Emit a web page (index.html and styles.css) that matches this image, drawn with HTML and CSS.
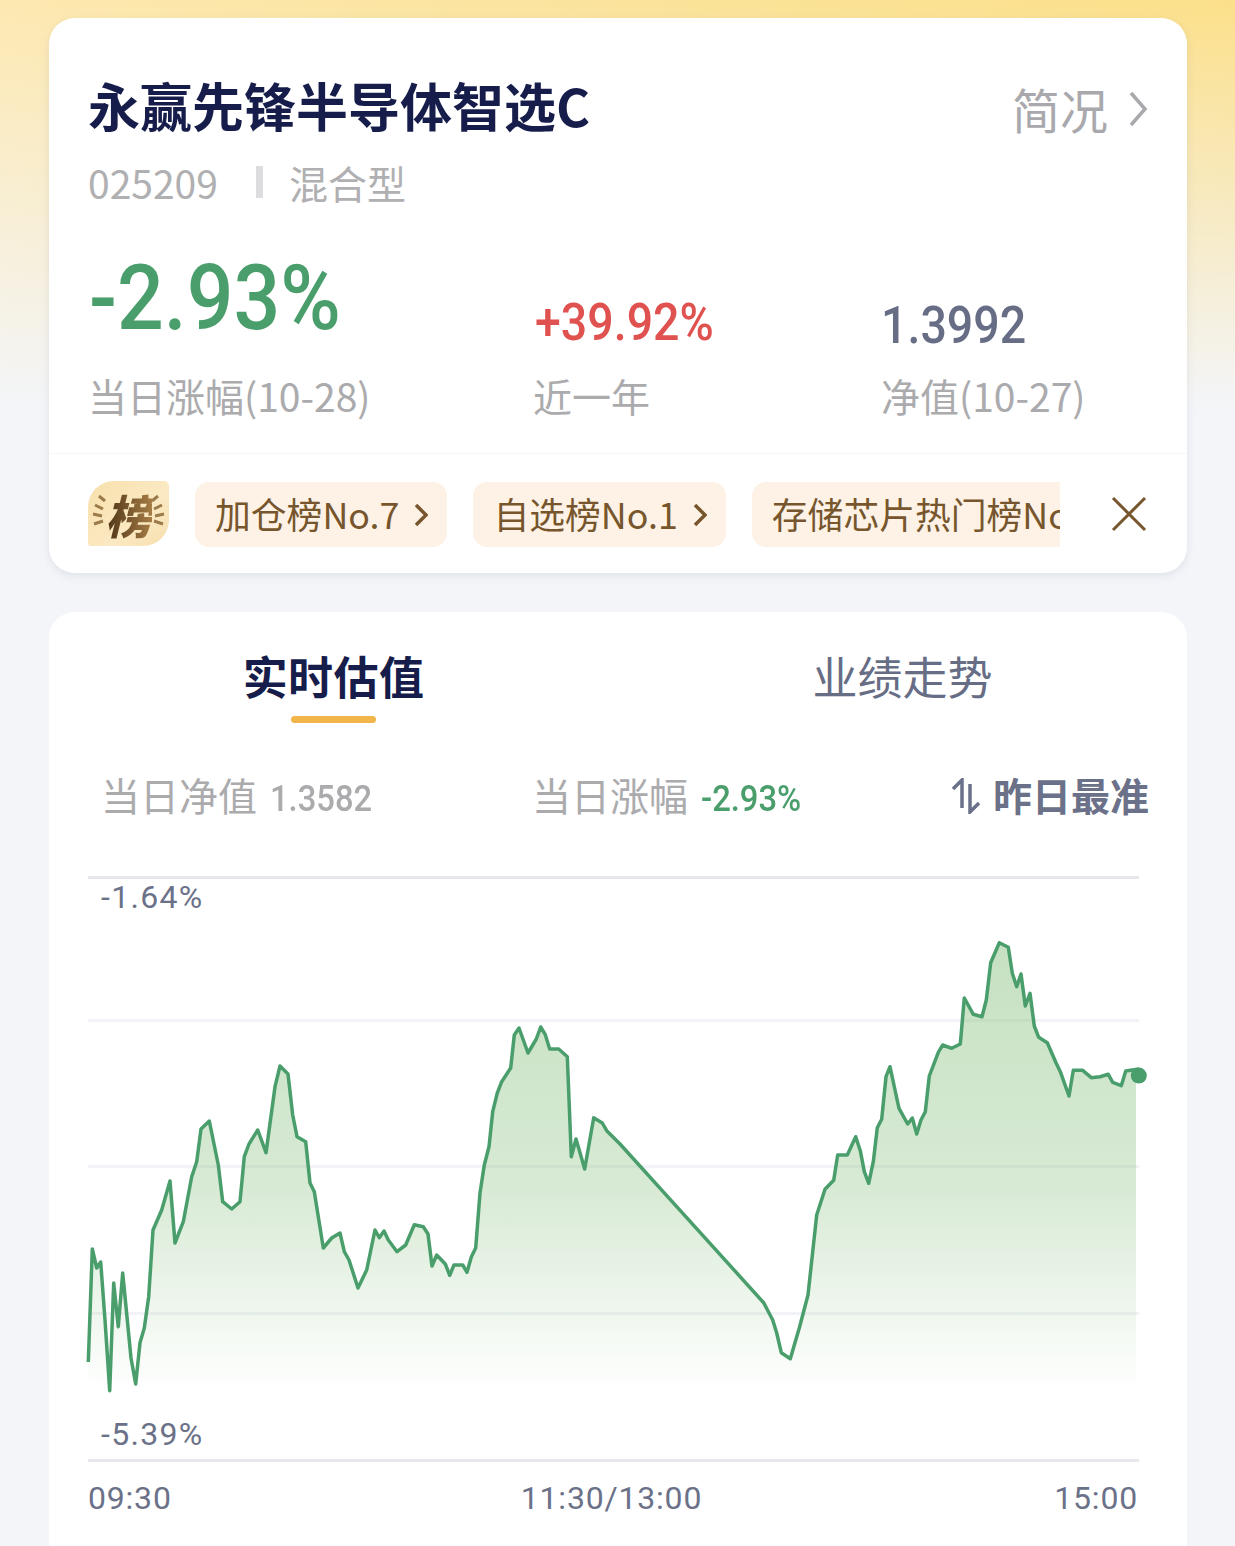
FILE: index.html
```html
<!DOCTYPE html>
<html lang="zh-CN">
<head>
<meta charset="utf-8">
<title>永赢先锋半导体智选C</title>
<link rel="stylesheet" href="styles.css">
</head>
<body>
<main class="page">
  <section class="card summary">
    <div class="summary-main">
      <header class="title-row">
        <h1 class="fund-name">永赢先锋半导体智选C</h1>
        <a class="brief">简况
          <svg class="brief-arrow" viewBox="0 0 20 36"><path d="M3 2l14 16L3 34"/></svg>
        </a>
      </header>
      <div class="meta">
        <span class="code">025209</span>
        <i class="meta-sep"></i>
        <span class="type">混合型</span>
      </div>
      <div class="stats">
        <div class="stat stat-day">
          <div class="big green"><span class="narrow">-2.93%</span></div>
          <div class="stat-label">当日涨幅(10-28)</div>
        </div>
        <div class="stat stat-year">
          <div class="mid red"><span class="narrow">+39.92%</span></div>
          <div class="stat-label">近一年</div>
        </div>
        <div class="stat stat-nav">
          <div class="mid slate"><span class="narrow">1.3992</span></div>
          <div class="stat-label">净值(10-27)</div>
        </div>
      </div>
    </div>
    <div class="rank-strip">
      <div class="rank-badge">
        <svg class="wheat" viewBox="0 0 81 65"><path d="M7 24l8 4M5 33l9 2M6 43l9-3M11 15l6 5M74 24l-8 4M76 33l-9 2M75 43l-9-3M70 15l-6 5"/></svg>
        <span class="rank-char">榜</span>
      </div>
      <div class="rank-tags">
        <a class="tag">加仓榜No.7<svg class="tag-arrow" viewBox="0 0 14 24"><path d="M2 2l10 10L2 22"/></svg></a>
        <a class="tag">自选榜No.1<svg class="tag-arrow" viewBox="0 0 14 24"><path d="M2 2l10 10L2 22"/></svg></a>
        <a class="tag">存储芯片热门榜No.1</a>
      </div>
      <svg class="rank-close" viewBox="0 0 36 36"><path d="M2 2l32 32M34 2L2 34"/></svg>
    </div>
  </section>

  <section class="card trend">
    <nav class="tabs">
      <div class="tab active">实时估值</div>
      <div class="tab">业绩走势</div>
    </nav>
    <div class="estimates">
      <div class="estimate est-nav">当日净值<span class="est-num">1.3582</span></div>
      <div class="estimate est-day">当日涨幅<span class="est-num green">-2.93%</span></div>
      <div class="accuracy">
        <svg class="sort" viewBox="0 0 28 36"><path d="M1 11l9-9v28M18 6v28l9-9"/></svg>昨日最准
      </div>
    </div>
    <div class="chart">
      <svg class="chart-svg" viewBox="88 877 1051 585">
        <defs>
          <linearGradient id="fill" gradientUnits="userSpaceOnUse" x1="0" y1="940" x2="0" y2="1392">
            <stop offset="0" stop-color="#8cc283" stop-opacity=".5"/>
            <stop offset=".55" stop-color="#8cc283" stop-opacity=".34"/>
            <stop offset="1" stop-color="#8cc283" stop-opacity="0"/>
          </linearGradient>
        </defs>
        <path class="grid grid-edge" d="M88 877.5H1139M88 1460.5H1139"/>
        <path class="grid" d="M88 1020.5H1139M88 1166.5H1139M88 1313.5H1139"/>
        <path class="area" d="M88.3 1392V1362L92.3 1249 96.7 1268 100.7 1262 105 1320 109.7 1390.7 113.7 1283 118.3 1326.7 122.7 1273 131 1358 135.7 1384 140 1342.7 144.3 1328 148.7 1296.7 153 1230 161.7 1210 170 1181 175 1243 183.3 1221.7 191.7 1176.7 196.7 1161.7 201 1129 209.3 1121 218.3 1165 222.7 1201.7 231.7 1209 240 1201.7 244.3 1156.7 249 1144 257.7 1130 266 1152.7 275 1086.7 280 1066 288 1074 292.7 1115 297 1136.7 305.7 1141.7 310 1183 314.3 1191.7 323.3 1248 331.7 1238 340 1233 344.3 1251.7 349 1260 358 1288 366.7 1270 375 1230 379.3 1237.7 384 1231 388.3 1240 397 1251.7 405.7 1245 414.3 1224.7 423.3 1226.7 428 1234 432 1266 436.7 1255 445.3 1264 449.7 1275.3 454 1265 462.7 1265 467 1272.3 471.3 1257 475.7 1248 480 1193 484.3 1165 489 1146.7 492.7 1111.7 497.3 1093 501.7 1081.7 510.7 1068 514.3 1035 519 1028 528 1053 536.3 1039 540.7 1027 545.3 1034.7 549.7 1049 558.7 1049 567.3 1056.7 571.3 1156.7 576 1139 584.7 1169 593.7 1117.7 602.3 1123 606.7 1130.7 620 1144 676.7 1206.7 763.7 1302.7 772.7 1320 776.7 1333 781.3 1352.7 790.3 1358.7 799.3 1328 808 1295 816.7 1215 825 1189.3 833.7 1180.3 837.7 1155 847.3 1155 855.7 1136.7 860.3 1150.7 864.3 1171.7 868.7 1183.3 873.3 1161.7 877.3 1127.7 881.7 1119.3 886 1076.7 890 1066.7 895 1090 899 1108.3 907.7 1124 912.3 1118 916.7 1134 921 1120 925.3 1111.7 929.3 1076 938.3 1052.3 942.7 1045 951.7 1048.3 960.3 1044 964.3 998 973.3 1014.3 982 1016.7 986.3 1000 990.7 962.7 999.3 942.7 1008.3 947.3 1012.3 973.3 1016.7 986.7 1021 974 1025.3 1006 1030 993.3 1034.3 1026 1038.7 1037.3 1047.3 1042.7 1056 1062.7 1060.3 1071.7 1069 1096 1073.3 1070.3 1082.7 1070.3 1091.3 1077.7 1100 1076.7 1108.3 1074.3 1112.7 1082.3 1121.3 1085.7 1125.7 1071 1136 1069.5V1392Z"/>
        <path class="line" d="M88.3 1362L92.3 1249 96.7 1268 100.7 1262 105 1320 109.7 1390.7 113.7 1283 118.3 1326.7 122.7 1273 131 1358 135.7 1384 140 1342.7 144.3 1328 148.7 1296.7 153 1230 161.7 1210 170 1181 175 1243 183.3 1221.7 191.7 1176.7 196.7 1161.7 201 1129 209.3 1121 218.3 1165 222.7 1201.7 231.7 1209 240 1201.7 244.3 1156.7 249 1144 257.7 1130 266 1152.7 275 1086.7 280 1066 288 1074 292.7 1115 297 1136.7 305.7 1141.7 310 1183 314.3 1191.7 323.3 1248 331.7 1238 340 1233 344.3 1251.7 349 1260 358 1288 366.7 1270 375 1230 379.3 1237.7 384 1231 388.3 1240 397 1251.7 405.7 1245 414.3 1224.7 423.3 1226.7 428 1234 432 1266 436.7 1255 445.3 1264 449.7 1275.3 454 1265 462.7 1265 467 1272.3 471.3 1257 475.7 1248 480 1193 484.3 1165 489 1146.7 492.7 1111.7 497.3 1093 501.7 1081.7 510.7 1068 514.3 1035 519 1028 528 1053 536.3 1039 540.7 1027 545.3 1034.7 549.7 1049 558.7 1049 567.3 1056.7 571.3 1156.7 576 1139 584.7 1169 593.7 1117.7 602.3 1123 606.7 1130.7 620 1144 676.7 1206.7 763.7 1302.7 772.7 1320 776.7 1333 781.3 1352.7 790.3 1358.7 799.3 1328 808 1295 816.7 1215 825 1189.3 833.7 1180.3 837.7 1155 847.3 1155 855.7 1136.7 860.3 1150.7 864.3 1171.7 868.7 1183.3 873.3 1161.7 877.3 1127.7 881.7 1119.3 886 1076.7 890 1066.7 895 1090 899 1108.3 907.7 1124 912.3 1118 916.7 1134 921 1120 925.3 1111.7 929.3 1076 938.3 1052.3 942.7 1045 951.7 1048.3 960.3 1044 964.3 998 973.3 1014.3 982 1016.7 986.3 1000 990.7 962.7 999.3 942.7 1008.3 947.3 1012.3 973.3 1016.7 986.7 1021 974 1025.3 1006 1030 993.3 1034.3 1026 1038.7 1037.3 1047.3 1042.7 1056 1062.7 1060.3 1071.7 1069 1096 1073.3 1070.3 1082.7 1070.3 1091.3 1077.7 1100 1076.7 1108.3 1074.3 1112.7 1082.3 1121.3 1085.7 1125.7 1071 1139 1069"/>
        <circle class="dot" cx="1138.8" cy="1075.6" r="8"/>
      </svg>
      <span class="axis-label axis-top">-1.64%</span>
      <span class="axis-label axis-bottom">-5.39%</span>
    </div>
    <div class="times">
      <span>09:30</span>
      <span class="time-mid">11:30/13:00</span>
      <span>15:00</span>
    </div>
  </section>
</main>
</body>
</html>
```

FILE: styles.css
```css
* { box-sizing: border-box; }
html, body { margin: 0; height: 100%; }
body {
  width: 1235px;
  height: 1546px;
  overflow: hidden;
  background:
    linear-gradient(180deg, rgba(243,245,249,0) 0, #f3f5f9 410px) no-repeat,
    linear-gradient(100deg, #fde8b0 0, #fae296 55%, #fcdf88 100%) no-repeat;
  background-size: 100% 600px, 100% 600px;
  background-color: #f3f5f9;
  font-family: "Noto Sans CJK SC", "Noto Sans", sans-serif;
  color: #171d4b;
}
.page { display: flex; flex-direction: column; gap: 39px; padding: 18px 48px 0 49px; }
.card { background: #fff; border-radius: 26px; }
.summary { height: 555px; box-shadow: 0 3px 8px rgba(90,100,130,.12); display: flex; flex-direction: column; }
.summary-main { height: 435px; padding: 0 39px; }
.title-row { display: flex; justify-content: space-between; align-items: center; height: 130px; padding-top: 44px; }
.fund-name { margin: 0; font-size: 52px; line-height: 70px; font-weight: 700; color: #171d4b; }
.brief { display: flex; align-items: center; gap: 20px; font-size: 48px; line-height: 60px; color: #a9a9ad; margin-top: 6px; }
.brief-arrow { width: 20px; height: 36px; fill: none; stroke: #a9a9ad; stroke-width: 3.5; margin-top: 2px; }
.meta { display: flex; align-items: center; height: 50px; margin-top: 9px; color: #b0b0b2; font-size: 39px; }
.code { width: 168px; }
.narrow { display: inline-block; transform-origin: left center; font-family: Roboto, sans-serif; }
.meta-sep { width: 7px; height: 32px; background: #dddddf; margin-right: 26px; }
.stats { display: flex; margin-top: 28px; }
.stat { display: flex; flex-direction: column; }
.stat-day { width: 445px; }
.stat-year { width: 348px; }
.big { height: 131px; padding-left: 1px; font-size: 90px; line-height: 110px; font-weight: 500; }
.big .narrow { transform: scaleX(.915); }
.mid { height: 131px; padding-top: 48px; padding-left: 2px; font-size: 52px; line-height: 70px; font-weight: 500; }
.mid .narrow { transform: scaleX(.895); }
.stat-nav .mid { padding-top: 51px; padding-left: 0; }
.green { color: #4a9e6c; }
.red { color: #e0524f; }
.slate { color: #666d85; }
.stat-label { font-size: 39px; line-height: 50px; color: #ababae; margin-top: 4px; }
.rank-strip { height: 120px; display: flex; align-items: center; padding: 0 40px 0 39px; border-top: 1px solid #f7f7f9; border-radius: 0 0 26px 26px; }
.rank-badge { position: relative; width: 81px; height: 65px; flex: none; display: flex; align-items: center; justify-content: center; background: linear-gradient(135deg, #f8e0ac, #fbe9c3 60%, #f6dfae); border-radius: 26px 5px 26px 3px; }
.wheat { position: absolute; inset: 0; fill: none; stroke: #9c7b4a; stroke-width: 3; }
.rank-char { position: relative; font-size: 46px; line-height: 60px; font-weight: 900; font-style: italic; background: linear-gradient(90deg, #4f3518, #a57c45); -webkit-background-clip: text; background-clip: text; color: transparent; }
.rank-tags { display: flex; gap: 26px; width: 865px; margin-left: 26px; margin-top: 2px; overflow: hidden; flex: none; }
.tag { flex: none; display: flex; align-items: center; height: 65px; padding: 0 19px 3px 20px; background: #fdf2e5; border-radius: 14px; font-size: 35.8px; color: #77562d; white-space: nowrap; }
.tag-arrow { width: 14px; height: 24px; margin-left: 15px; margin-top: 3px; fill: none; stroke: #77562d; stroke-width: 3.5; }
.rank-close { width: 36px; height: 36px; margin-left: 51px; flex: none; fill: none; stroke: #77562d; stroke-width: 3; }
.trend { height: 960px; padding: 0 48px 0 39px; }
.tabs { display: flex; height: 111px; margin: 0 -48px 0 -39px; }
.tab { position: relative; width: 50%; text-align: center; font-size: 45px; line-height: 60px; padding-top: 34px; color: #666d85; }
.tab.active { font-weight: 700; color: #171d4b; letter-spacing: .4px; }
.tab.active::after { content: ""; position: absolute; left: 50%; margin-left: -43px; bottom: 0; width: 85px; height: 7px; border-radius: 4px; background: #f2b54a; }
.estimates { display: flex; align-items: center; height: 60px; margin-top: 41px; font-size: 39px; color: #ababae; }
.estimate { display: flex; align-items: baseline; flex: none; }
.est-nav { width: 444px; padding-left: 13px; }
.est-day { width: 420px; }
.est-num { display: inline-block; margin-left: 13px; font-family: Roboto, sans-serif; font-weight: 500; font-size: 36px; transform: scaleX(.91); transform-origin: left center; }
.accuracy { display: flex; align-items: center; flex: none; font-size: 39px; font-weight: 700; color: #6b7188; white-space: nowrap; }
.sort { width: 28px; height: 36px; margin-right: 13px; margin-top: 3px; fill: none; stroke: #6b7188; stroke-width: 3.5; }
.chart { position: relative; height: 585px; margin-top: 53px; }
.chart-svg { display: block; width: 1051px; height: 585px; overflow: visible; }
.grid { fill: none; stroke: #f1f3f7; stroke-width: 3; }
.grid-edge { stroke: #e6e8ee; }
.area { fill: url(#fill); }
.line { fill: none; stroke: #4a9e6c; stroke-width: 3.5; stroke-linejoin: round; }
.dot { fill: #4a9e6c; }
.axis-label { position: absolute; left: 13px; font-family: Roboto, sans-serif; font-size: 32px; line-height: 40px; letter-spacing: 1.3px; color: #6b7188; }
.axis-top { top: 0; }
.axis-bottom { bottom: 8px; }
.times { display: flex; justify-content: space-between; height: 50px; margin-top: 11px; padding-right: 1px; font-family: Roboto, sans-serif; font-size: 32px; line-height: 50px; letter-spacing: .8px; color: #6b7188; }
.time-mid { margin-left: -3px; }
```
